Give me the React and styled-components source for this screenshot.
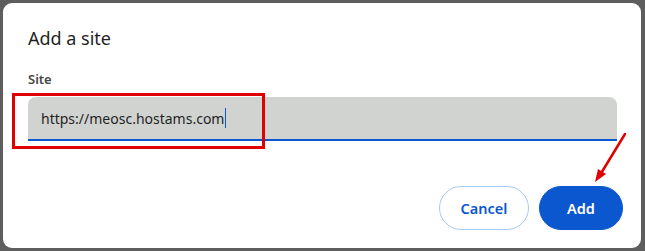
import React from "react";
import styled, { createGlobalStyle } from "styled-components";

const GlobalStyle = createGlobalStyle`
  html, body {
    margin: 0;
    padding: 0;
    background: #5e5e5e;
    font-family: "Noto Sans", "Open Sans", Arial, sans-serif;
  }
`;

const Backdrop = styled.div`
  width: 645px;
  height: 251px;
  padding: 3px 4px 0 3px;
  box-sizing: border-box;
  overflow: hidden;
`;

const Dialog = styled.div`
  position: relative;
  background: #ffffff;
  border-radius: 9px;
  height: 245px;
  box-sizing: border-box;
  padding: 22px 24px 0 25px;
  display: flex;
  flex-direction: column;
`;

const Title = styled.h2`
  margin: 0;
  font-size: 18px;
  font-weight: 400;
  color: #1f1f1f;
  line-height: 26px;
`;

const Label = styled.label`
  margin-top: 20px;
  font-size: 13px;
  font-weight: 600;
  color: #474747;
  line-height: 16px;
`;

const InputWrap = styled.div`
  position: relative;
  margin-top: 10px;
`;

const Field = styled.div`
  height: 42px;
  background: #d1d3d1;
  border-radius: 8px 8px 0 0;
  border-bottom: 2px solid #0b57d0;
  display: flex;
  align-items: center;
  padding: 0 13px;
  font-size: 14px;
  color: #1f1f1f;
`;

const Caret = styled.span`
  display: inline-block;
  width: 1px;
  height: 20px;
  background: #0b57d0;
  margin-left: 1px;
`;

const Highlight = styled.div`
  position: absolute;
  left: -16px;
  top: -4px;
  width: 247px;
  height: 50px;
  border: 3px solid #e10000;
`;

const Actions = styled.div`
  margin-top: 45px;
  margin-right: -6px;
  display: flex;
  justify-content: flex-end;
  gap: 10px;
`;

const Button = styled.button`
  height: 44px;
  min-width: ${(p) => (p.primary ? "84px" : "90px")};
  border-radius: 22px;
  border: 1px solid ${(p) => (p.primary ? "#0b57d0" : "#a8c7fa")};
  background: ${(p) => (p.primary ? "#0b57d0" : "#ffffff")};
  color: ${(p) => (p.primary ? "#ffffff" : "#0b57d0")};
  font-family: "Noto Sans", "Open Sans", Arial, sans-serif;
  font-size: 14.5px;
  font-weight: 600;
  padding: 0 20px;
`;

const Arrow = styled.svg`
  position: absolute;
  left: 588px;
  top: 128px;
  overflow: visible;
`;

export default function App() {
  return (
    <>
      <GlobalStyle />
      <Backdrop>
        <Dialog>
          <Title>Add a site</Title>
          <Label>Site</Label>
          <InputWrap>
            <Field>
              https://meosc.hostams.com
              <Caret />
            </Field>
            <Highlight />
          </InputWrap>
          <Actions>
            <Button>Cancel</Button>
            <Button primary>Add</Button>
          </Actions>
          <Arrow width="40" height="56" viewBox="0 0 40 56">
            <line x1="34" y1="3" x2="9" y2="44" stroke="#e10000" strokeWidth="2.5" strokeLinecap="round" />
            <polygon points="4,51 7,38 15,43" fill="#e10000" />
          </Arrow>
        </Dialog>
      </Backdrop>
    </>
  );
}
